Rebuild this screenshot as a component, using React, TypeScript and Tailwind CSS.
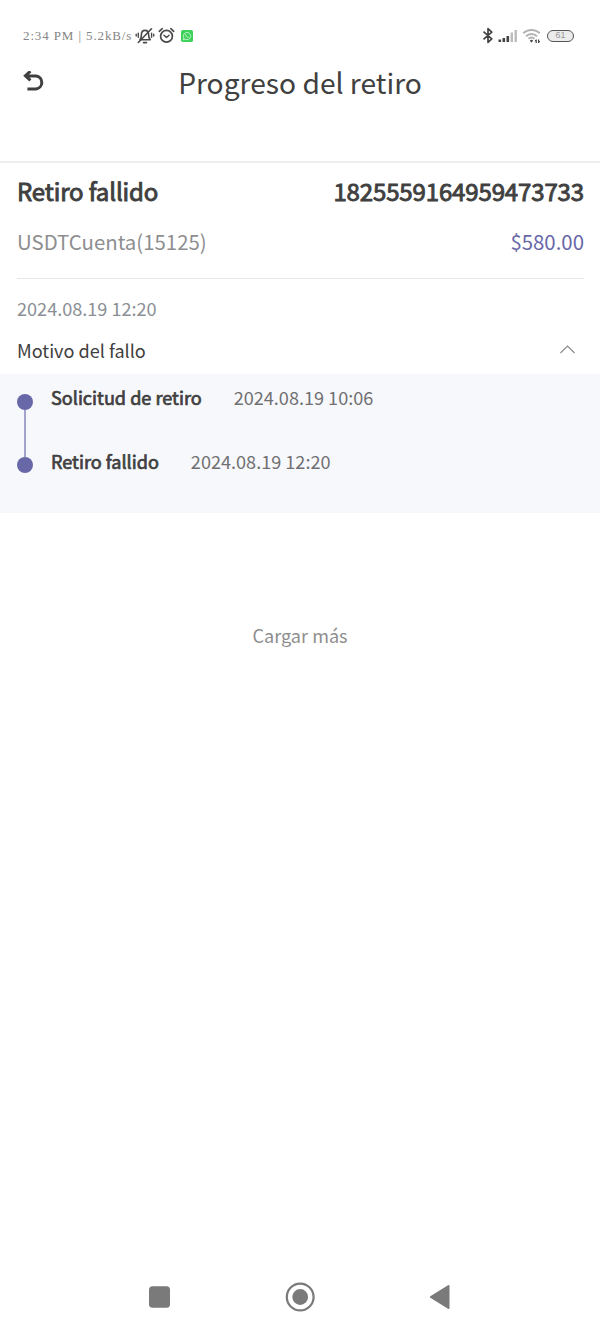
import type { ReactNode } from 'react';

const STEPS = [
  { title: 'Solicitud de retiro', time: '2024.08.19 10:06' },
  { title: 'Retiro fallido', time: '2024.08.19 12:20' },
];

// Regular glyphs thickened by a thin stroke, as Android does for a missing bold face
const Strong = ({ children, className }: { children: ReactNode; className: string }) => (
  <span className={`text-[#404040] ${className}`}>{children}</span>
);

const MutedBellIcon = () => (
  <svg width="20" height="18" viewBox="0 0 20 18" fill="none" stroke="#4a4a4a" strokeWidth="1.6" strokeLinecap="round">
    <path d="M5 12.8h10.3c-1.5-1.3-1.7-2.6-1.7-5C13.6 5.3 12.2 3.4 10 3.4S6.4 5.3 6.4 7.8c0 2.3-.2 3.6-1.4 5z" strokeLinejoin="round" />
    <path d="M8.5 15.6h3" />
    <path d="M16.5 1.8 3.3 15.5" />
    <path d="M3.3 6.2v4M1.2 7.3v1.8M16.6 6.2v4M18.7 7.3v1.8" strokeWidth="1.4" />
  </svg>
);

const AlarmIcon = () => (
  <svg width="17" height="17" viewBox="0 0 17 17" fill="none" stroke="#4a4a4a" strokeWidth="1.7" strokeLinecap="round">
    <circle cx="8.5" cy="9.2" r="5.9" />
    <path d="M1.3 4.3 4.2 1.7M15.7 4.3 12.8 1.7" />
    <path d="M6 8.3l2.5 2.2L11 8.3" strokeWidth="1.5" strokeLinejoin="round" />
  </svg>
);

const ChatIcon = () => (
  <svg width="12" height="12" viewBox="0 0 12 12">
    <rect width="12" height="12" rx="1.8" fill="#3fd25b" />
    <path d="M2.3 9.8l.6-2a3.6 3.6 0 1 1 1.4 1.4z" fill="none" stroke="#c9f3d1" strokeWidth=".9" />
    <path d="M4.7 4.4c0 1.7 1.3 2.9 2.9 3" fill="none" stroke="#c9f3d1" strokeWidth="1" />
  </svg>
);

const BluetoothIcon = () => (
  <svg width="12" height="17" viewBox="0 0 12 17" fill="none" stroke="#444" strokeWidth="1.7">
    <path d="M1.5 4.7 9.8 11.8 6 15.3V1.7L9.8 5.2 1.5 12.3" strokeLinejoin="round" />
  </svg>
);

const SignalIcon = () => (
  <svg width="20" height="14" viewBox="0 0 20 14">
    <path d="M.5 10.5h2.6V13H.5zM4.5 9h2.6v4H4.5zM8.5 7h2.6v6H8.5z" fill="#444" />
    <path d="M12.6 3.5H15V13h-2.4zM16.5 1h2.4v12h-2.4z" fill="#bbb" />
  </svg>
);

const WifiIcon = () => (
  <svg width="20" height="16" viewBox="0 0 20 16" fill="none" stroke="#b2b2b2" strokeWidth="2">
    <path d="M1.3 5.3a11.6 11.6 0 0 1 16.4 0M4 8.2a7.8 7.8 0 0 1 11 0M6.5 10.8a4.3 4.3 0 0 1 6 0" />
    <path d="M7.9 12.5a2.3 2.3 0 0 1 3.2 0l-1.6 2.2z" fill="#444" stroke="none" />
    <path d="M14.2 11.8V15M16.6 11.5v3.2" stroke="#444" strokeWidth="1.2" />
    <path d="M13 13.3l1.2-1.6M17.8 13.1l-1.2 1.6" stroke="#444" strokeWidth="1" />
  </svg>
);

const StatusBar = () => (
  <div className="flex h-[71px] items-center justify-between pr-[26px] pl-[23px]">
    <div className="flex items-center">
      <span className="w-[112px] font-['Liberation_Serif',serif] text-[13px] tracking-[0.88px] whitespace-nowrap text-[#858585]">
        2:34 PM | 5.2kB/s
      </span>
      <MutedBellIcon />
      <div className="ml-[3px]">
        <AlarmIcon />
      </div>
      <div className="ml-[6px]">
        <ChatIcon />
      </div>
    </div>
    <div className="flex items-center">
      <BluetoothIcon />
      <div className="ml-[4px]">
        <SignalIcon />
      </div>
      <div className="ml-[4px]">
        <WifiIcon />
      </div>
      <div className="ml-[5px] flex h-[12px] w-[27px] items-center justify-center rounded-full border-[1.5px] border-[#555] bg-[#ececec] font-['Liberation_Sans',sans-serif] text-[9px] leading-none text-[#999]">
        61
      </div>
    </div>
  </div>
);

const Header = () => (
  <header className="grid h-[92px] grid-cols-[80px_1fr_80px] border-b-2 border-[#eeeeee]">
    <svg className="ml-[22px]" width="24" height="22" viewBox="0 0 24 22" fill="none" stroke="#404040" strokeWidth="3">
      <path d="M8.4.2 3.4 4.8l5 4.6M3.4 4.9h10.6a6.6 6.6 0 0 1 0 13.1H5.4" />
    </svg>
    <h1 className="text-center text-[28.2px] leading-[21px] whitespace-nowrap text-[#404040]">Progreso del retiro</h1>
  </header>
);

const Timeline = () => (
  <div className="flex h-[139px] bg-[#f7f8fc] pl-[17px]">
    <div className="flex w-4 flex-col items-center pt-5">
      <div className="size-4 rounded-full bg-[#6868a8]" />
      <div className="h-[47px] w-[2px] bg-[#a2a2ca]" />
      <div className="size-4 rounded-full bg-[#6868a8]" />
    </div>
    <div className="ml-[18px] flex flex-col gap-9 pt-[9px]">
      {STEPS.map((step) => (
        <div key={step.title} className="flex h-7 items-center leading-7">
          <Strong className="text-[18.1px] [-webkit-text-stroke:0.7px_#404040]">{step.title}</Strong>
          <span className="ml-8 text-[18.1px] text-[#707072]">{step.time}</span>
        </div>
      ))}
    </div>
  </div>
);

const NavBar = () => (
  <nav className="mt-auto flex h-[72px] items-center justify-center">
    <svg width="302" height="30" viewBox="0 0 302 30" fill="#7a7a7a">
      <rect x="0" y="4.3" width="21" height="21.4" rx="3.5" />
      <circle cx="151.2" cy="15" r="13.4" fill="none" stroke="#7a7a7a" strokeWidth="2.2" />
      <circle cx="151.2" cy="15" r="7.9" />
      <path d="M281.3 14.2 299 3.3q1.5-.8 1.5.8v21.8q0 1.6-1.5.8L281.3 15.8q-1.2-.8 0-1.6z" />
    </svg>
  </nav>
);

export default function App() {
  return (
    <div className="flex h-[1333px] w-[600px] flex-col bg-white font-['Noto_Sans_CJK_SC',sans-serif]">
      <StatusBar />
      <Header />
      <section className="pr-4 pl-[17px]">
        <div className="flex h-[55px] items-center justify-between pt-px text-[24px] tracking-[-0.13px]">
          <Strong className="[-webkit-text-stroke:0.9px_#404040]">Retiro fallido</Strong>
          <Strong className="[-webkit-text-stroke:0.9px_#404040]">1825559164959473733</Strong>
        </div>
        <div className="flex h-[61px] items-center justify-between border-b border-[#e6e6e6] pb-[13px] text-[20.4px]">
          <span className="text-[#8e8e90]">USDTCuenta(15125)</span>
          <span className="text-[#6868a8]">$580.00</span>
        </div>
        <p className="mt-[14px] text-[18.1px] leading-[30px] text-[#8a8f95]">2024.08.19 12:20</p>
        <div className="flex h-[51px] items-center justify-between pt-[2px] pr-[9px]">
          <span className="pt-[3px] text-[18.1px] text-[#404040]">Motivo del fallo</span>
          <svg width="15" height="9" viewBox="0 0 15 9" fill="none" stroke="#8c8c8c" strokeWidth="1.2">
            <path d="M.5 8 7.5 1l7 7" />
          </svg>
        </div>
      </section>
      <Timeline />
      <button className="mt-[107px] text-center text-[18.1px] leading-[30px] text-[#8e8e8e]">Cargar más</button>
      <NavBar />
    </div>
  );
}
